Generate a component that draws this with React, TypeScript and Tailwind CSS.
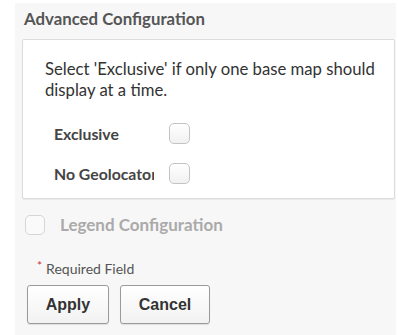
import React from "react";

function Box({ disabled = false }: { disabled?: boolean }) {
  return (
    <div
      className={
        "w-[21px] h-[21px] rounded-[5px] border shrink-0 " +
        (disabled
          ? "border-[#d6d6d6] bg-[#f9f9f9]"
          : "border-[#c4c4c4] bg-gradient-to-b from-[#ffffff] to-[#f1f1f1]")
      }
    />
  );
}

export default function App() {
  return (
    <div className="w-[398px] h-[335px] bg-white pl-[15px] pt-[3px] overflow-hidden" style={{ fontFamily: "Lato, 'Open Sans', sans-serif" }}>
      <div className="w-[381px] h-[332px] bg-[#f7f7f7] pt-[6px] flex flex-col">
        <div className="pl-[9px] text-[16.8px] leading-[20px] font-bold text-[#555]">Advanced Configuration</div>
        <div className="ml-[7px] mt-[10px] w-[373px] h-[160px] bg-white border border-[#dcdcdc] rounded-[2px] shadow-[0_1px_1px_rgba(0,0,0,0.06)] pt-[19px]">
          <p className="pl-[22px] pr-[6px] text-[16.7px] leading-[21px] text-[#333]">
            Select 'Exclusive' if only one base map should display at a time.
          </p>
          <div className="pl-[31px] mt-[22px] flex items-center h-[21px]">
            <div className="w-[100px] overflow-hidden whitespace-nowrap text-[15.8px] font-bold text-[#444]">Exclusive</div>
            <div className="ml-[15px]"><Box /></div>
          </div>
          <div className="pl-[31px] mt-[19px] flex items-center h-[21px]">
            <div className="w-[100px] overflow-hidden whitespace-nowrap text-[15.8px] font-bold text-[#444]">No Geolocator</div>
            <div className="ml-[15px]"><Box /></div>
          </div>
        </div>
        <div className="ml-[10px] mt-[16px] flex items-center h-[20px]">
          <div className="w-[20px] h-[20px] rounded-[5px] border border-[#d6d6d6] bg-[#fafafa]" />
          <span className="ml-[15px] text-[17px] font-bold text-[#aaa]">Legend Configuration</span>
        </div>
        <div className="ml-[22px] mt-[26px] flex items-center h-[14px] text-[14px] text-[#555]">
          <span className="text-[#c33] text-[12px] self-start leading-[10px] mr-[4px]">*</span>
          <span>Required Field</span>
        </div>
        <div className="ml-[12px] mt-[10px] flex gap-[11px]" style={{ fontFamily: "'Liberation Sans', Arial, sans-serif" }}>
          <button className="w-[82px] h-[39px] rounded-[3px] border border-[#9a9a9a] bg-gradient-to-b from-white to-[#f2f2f2] text-[16px] font-bold text-[#333] shadow-[0_1px_1px_rgba(0,0,0,0.1)]">Apply</button>
          <button className="w-[90px] h-[39px] rounded-[3px] border border-[#9a9a9a] bg-gradient-to-b from-white to-[#f2f2f2] text-[16px] font-bold text-[#333] shadow-[0_1px_1px_rgba(0,0,0,0.1)]">Cancel</button>
        </div>
      </div>
    </div>
  );
}
